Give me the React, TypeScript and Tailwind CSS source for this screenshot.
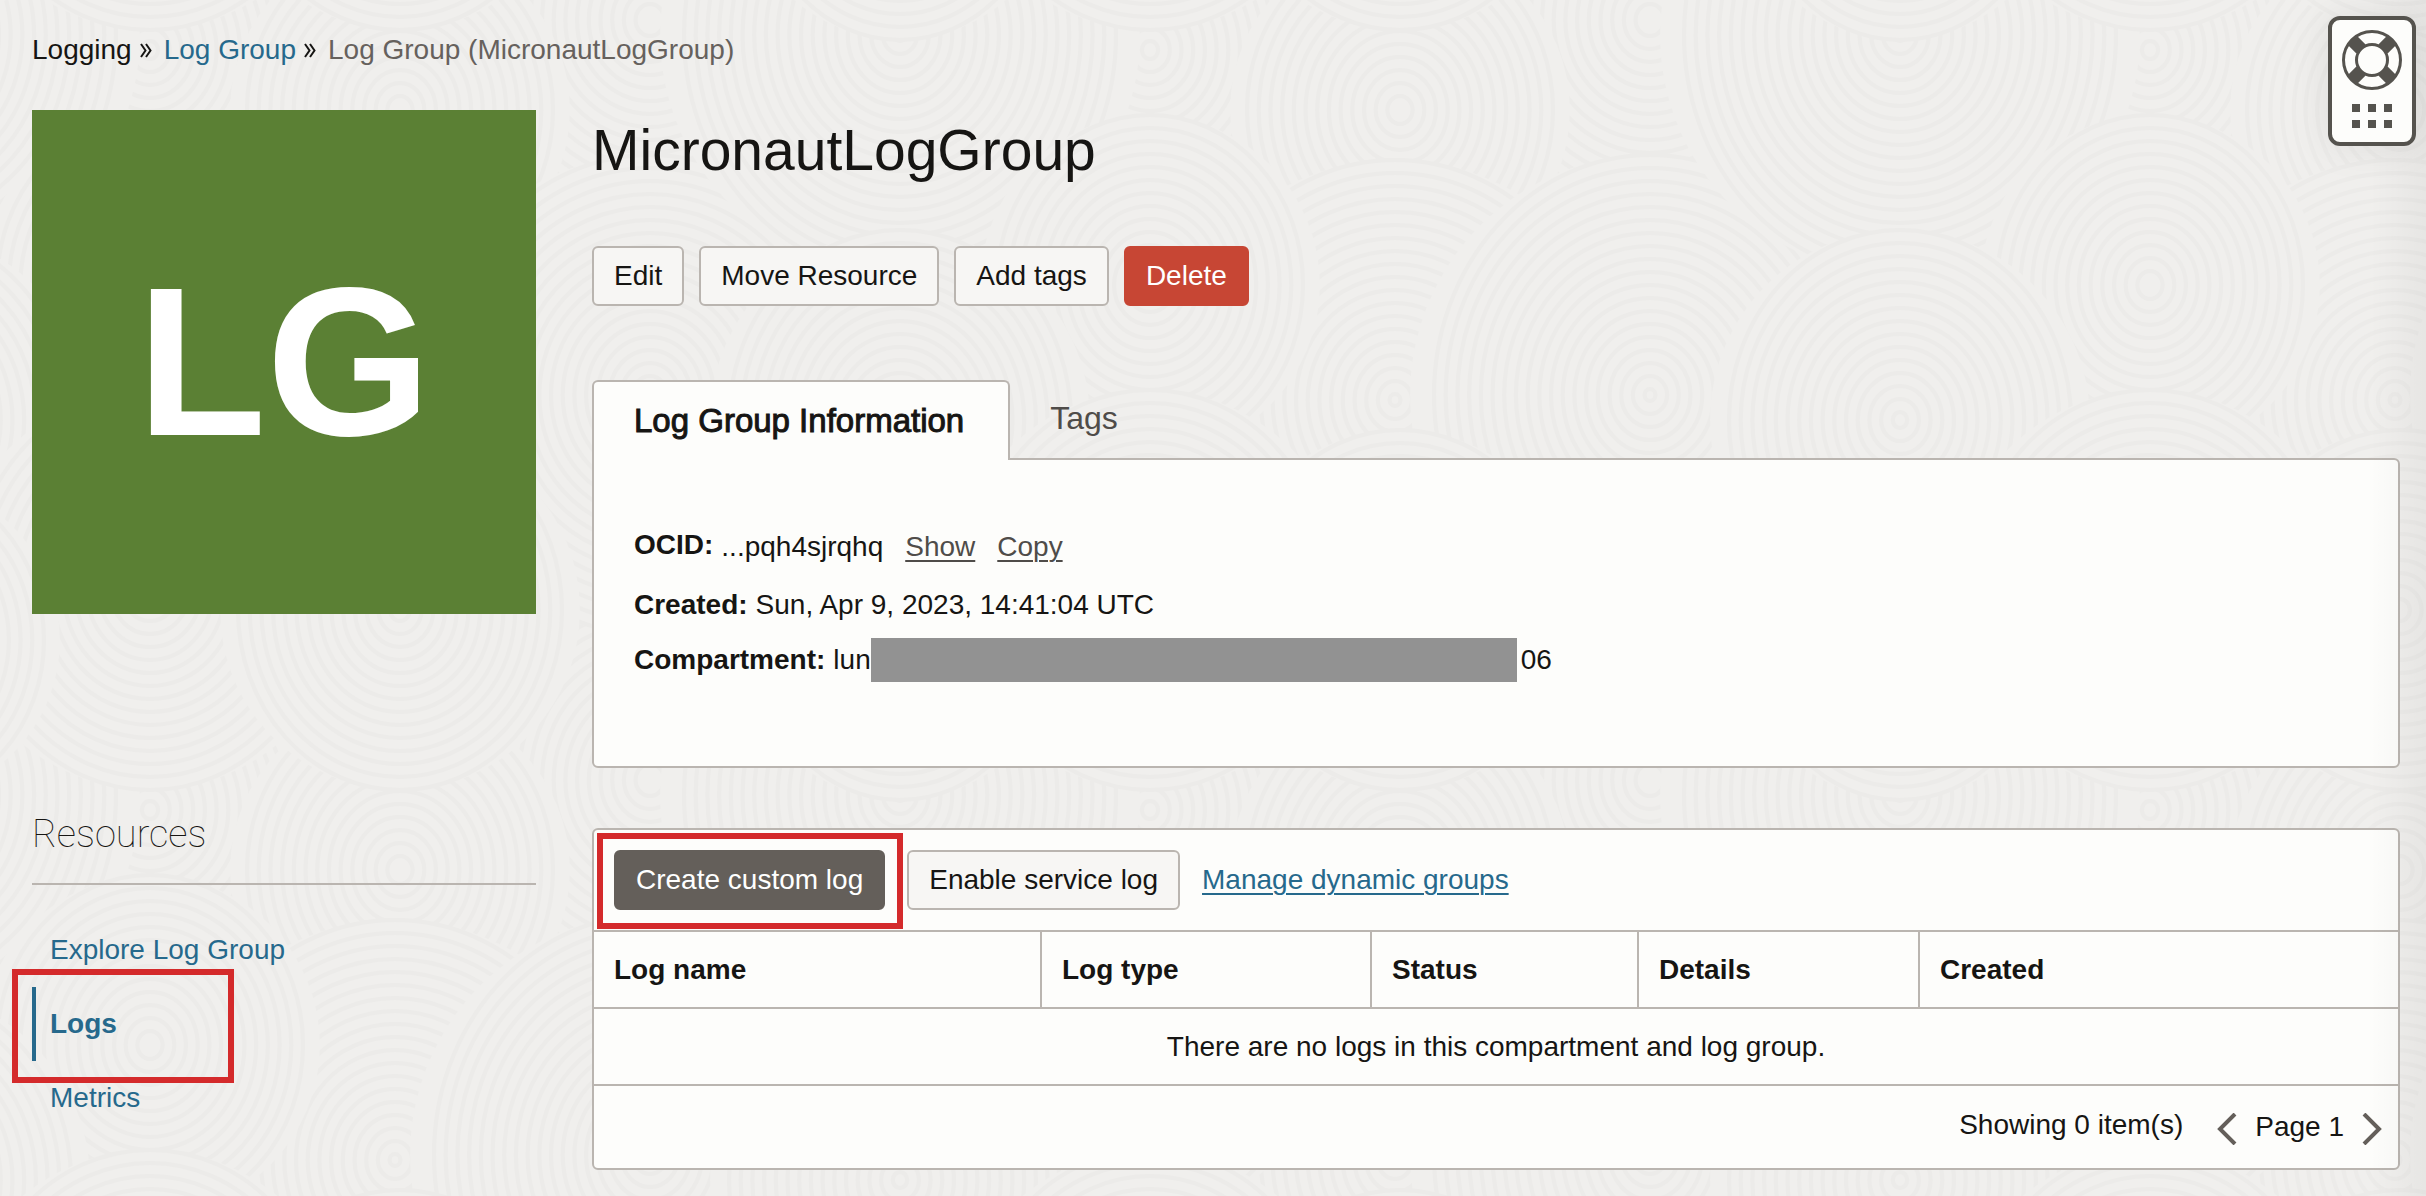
import type { ReactNode } from "react";

const SWIRLS: [number, number, number][] = [
  [650, 20, 185], [150, 50, 230], [400, 110, 170], [395, 400, 240], [650, 395, 240],
  [900, 35, 240], [150, 285, 170], [900, 420, 190], [150, 590, 200], [400, 610, 180], [900, 640, 160],
];
const SHIFTS_X = [-1000, 0, 1000];
const SHIFTS_Y = [-760, 0, 760];

function Swirl({ x, y, r }: { x: number; y: number; r: number }) {
  const rings: number[] = [];
  for (let k = r; k > 4; k -= 13) rings.push(k);
  return (
    <g>
      <circle cx={x} cy={y} r={r} fill="#f0efed" />
      {rings.map((k) => (
        <ellipse key={k} cx={x} cy={y} rx={k * 0.9} ry={k} fill="none" stroke="#ecebe9" strokeWidth="4" />
      ))}
    </g>
  );
}

function Texture() {
  return (
    <svg className="absolute inset-0 -z-10 h-full w-full" aria-hidden="true">
      <defs>
        <pattern id="swirls" width="1000" height="760" patternUnits="userSpaceOnUse">
          <rect width="1000" height="760" fill="#f0efed" />
          {SWIRLS.map(([x, y, r]) =>
            SHIFTS_X.map((dx) =>
              SHIFTS_Y.map((dy) => <Swirl key={`${x},${y},${dx},${dy}`} x={x + dx} y={y + dy} r={r} />),
            ),
          )}
        </pattern>
      </defs>
      <rect width="100%" height="100%" fill="url(#swirls)" />
    </svg>
  );
}

function Button({ children, tone = "plain" }: { children: ReactNode; tone?: "plain" | "danger" | "dark" }) {
  const tones = {
    plain: "border-[#bab5b0] bg-[#f7f6f4] text-[#161513]",
    danger: "border-[#c74634] bg-[#c74634] text-white",
    dark: "border-[#645f5a] bg-[#645f5a] text-white",
  };
  return (
    <button type="button" className={`h-[60px] rounded-md border-2 px-5 whitespace-nowrap ${tones[tone]}`}>
      {children}
    </button>
  );
}

function Separator() {
  return (
    <svg className="mx-2 h-5 w-3" viewBox="0 0 12 20" fill="none" stroke="#161513" strokeWidth="2" aria-hidden="true">
      <path d="M1 4l4.500 6.500-4.500 6.500M6 4l4.500 6.500-4.500 6.500" />
    </svg>
  );
}

function LifeRing() {
  return (
    <svg className="h-[60px] w-[60px]" viewBox="0 0 60 60" fill="none" stroke="#55534e" aria-hidden="true">
      <circle cx="30" cy="30" r="28.5" strokeWidth="3" />
      <circle cx="30" cy="30" r="15.5" strokeWidth="3" />
      <path d="M10.500 10.500l8.500 8.500M49.500 10.500l-8.500 8.500M10.500 49.500l8.500-8.500M49.500 49.500l-8.500-8.500" strokeWidth="13" />
    </svg>
  );
}

function Chevron({ d }: { d: string }) {
  return (
    <svg className="h-8 w-5" viewBox="0 0 20 32" fill="none" stroke="#645f5a" strokeWidth="4" aria-hidden="true">
      <path d={d} />
    </svg>
  );
}

const COLUMNS = [
  { label: "Log name", width: "w-[447px]" },
  { label: "Log type", width: "w-[330px]" },
  { label: "Status", width: "w-[267px]" },
  { label: "Details", width: "w-[281px]" },
  { label: "Created", width: "w-auto" },
];

export default function App() {
  return (
    <div className="relative isolate min-h-screen bg-[#f0efed] pt-8 pr-[26px] pb-[26px] pl-8 font-['Liberation_Sans',Arial,sans-serif] text-[28px] leading-9 text-[#161513]">
      <Texture />
      <nav aria-label="Breadcrumb" className="flex h-9 items-center whitespace-nowrap">
        <span>Logging</span>
        <Separator />
        <a href="#groups" className="ml-1 text-[#26698c]">Log Group</a>
        <Separator />
        <span className="ml-1 text-[#66615d]">Log Group (MicronautLogGroup)</span>
      </nav>

      <div className="mt-[42px] flex gap-14">
        <aside className="w-[504px] shrink-0">
          <div className="flex h-[504px] items-center justify-center bg-[#5b8034] text-[212px] leading-none font-bold text-white">
            LG
          </div>
          <h2 className="mt-[195px] border-b-2 border-[#bab5b0] pb-[23px] font-['Roboto',sans-serif] text-[38px] leading-[51px] font-thin">
            Resources
          </h2>
          <nav aria-label="Resources" className="mt-7 flex flex-col text-[#26698c]">
            <a href="#explore" className="flex h-[74px] items-center border-l-4 border-transparent pl-[14px]">Explore Log Group</a>
            <div className="relative">
              <a href="#logs" aria-current="page" className="flex h-[74px] items-center border-l-4 border-[#26698c] pl-[14px] font-bold">
                Logs
              </a>
              <div className="pointer-events-none absolute -top-[18px] -left-5 h-[114px] w-[222px] border-[6px] border-[#d42a2b]" />
            </div>
            <a href="#metrics" className="flex h-[74px] items-center border-l-4 border-transparent pl-[14px]">Metrics</a>
          </nav>
        </aside>

        <main className="min-w-0 flex-1">
          <h1 className="pt-[6px] text-[57px] leading-[68px]">MicronautLogGroup</h1>
          <div className="mt-[62px] flex gap-[15px]">
            <Button>Edit</Button>
            <Button>Move Resource</Button>
            <Button>Add tags</Button>
            <Button tone="danger">Delete</Button>
          </div>

          <section className="mt-[74px]">
            <div role="tablist" className="flex text-[32px]">
              <button
                type="button"
                role="tab"
                aria-selected="true"
                className="relative z-10 -mb-[2px] h-20 rounded-t-md border-2 border-b-0 border-[#bab5b0] bg-[#fdfdfb] pr-11 pl-10 text-[33px] [-webkit-text-stroke:1px_#161513]"
              >
                Log Group Information
              </button>
              <button type="button" role="tab" aria-selected="false" className="h-[76px] px-10 text-[#4f4c49]">
                Tags
              </button>
            </div>
            <div role="tabpanel" className="rounded-md rounded-tl-none border-2 border-[#bab5b0] bg-[#fdfdfb] px-10 pt-[67px] pb-[84px]">
              <dl>
                <div className="flex gap-2">
                  <dt className="font-bold">OCID:</dt>
                  <dd className="flex gap-[22px] pt-[2px]">
                    <span>...pqh4sjrqhq</span>
                    <button type="button" className="text-[#4f4c49] underline decoration-2 underline-offset-4">Show</button>
                    <button type="button" className="text-[#4f4c49] underline decoration-2 underline-offset-4">Copy</button>
                  </dd>
                </div>
                <div className="mt-[22px] flex gap-2">
                  <dt className="font-bold">Created:</dt>
                  <dd>Sun, Apr 9, 2023, 14:41:04 UTC</dd>
                </div>
                <div className="mt-[15px] flex h-11 items-center gap-2">
                  <dt className="font-bold">Compartment:</dt>
                  <dd className="flex items-center">
                    <span>lun</span>
                    <span className="mr-1 h-11 w-[646px] bg-[#929292]" />
                    <span>06</span>
                  </dd>
                </div>
              </dl>
            </div>
          </section>

          <section className="mt-[60px] overflow-hidden rounded-md border-2 border-[#bab5b0] bg-[#fdfdfb]">
            <div className="flex h-[100px] items-center gap-[22px] px-5">
              <div className="relative">
                <Button tone="dark">Create custom log</Button>
                <div className="pointer-events-none absolute -top-[17px] -right-[18px] -bottom-[19px] -left-[17px] border-[6px] border-[#d42a2b]" />
              </div>
              <Button>Enable service log</Button>
              <a href="#dynamic" className="text-[#26698c] underline decoration-2 underline-offset-4">Manage dynamic groups</a>
            </div>
            <table className="w-full table-fixed border-collapse">
              <thead>
                <tr className="h-[77px] border-y-2 border-[#bab5b0]">
                  {COLUMNS.map((c) => (
                    <th key={c.label} scope="col" className={`${c.width} border-l-2 border-[#bab5b0] pl-5 text-left font-bold first:border-l-0`}>
                      {c.label}
                    </th>
                  ))}
                </tr>
              </thead>
              <tbody>
                <tr className="h-[77px] border-b-2 border-[#bab5b0]">
                  <td colSpan={5} className="text-center">There are no logs in this compartment and log group.</td>
                </tr>
              </tbody>
            </table>
            <div className="flex h-[82px] items-center justify-end pr-4">
              <span className="mr-[34px] -mt-1">Showing 0 item(s)</span>
              <button type="button" aria-label="Previous page" className="mt-1">
                <Chevron d="M18 1L3 16l15 15" />
              </button>
              <span className="mx-[18px]">Page 1</span>
              <button type="button" aria-label="Next page" className="mt-1">
                <Chevron d="M2 1l15 15L2 31" />
              </button>
            </div>
          </section>
        </main>
      </div>

      <div className="pointer-events-none absolute inset-y-0 right-0 w-14 bg-linear-to-r from-transparent to-black/4" />
      <button
        type="button"
        aria-label="Help"
        className="absolute top-4 right-[10px] flex h-[130px] w-[88px] flex-col items-center gap-[14px] rounded-xl border-4 border-[#55534e] bg-[#fdfdfb] pt-[10px] shadow-[0_0_40px_rgba(0,0,0,0.08)]"
      >
        <LifeRing />
        <span className="grid grid-cols-3 gap-2">
          {[0, 1, 2, 3, 4, 5].map((n) => (
            <span key={n} className="size-2 bg-[#55534e]" />
          ))}
        </span>
      </button>
    </div>
  );
}
